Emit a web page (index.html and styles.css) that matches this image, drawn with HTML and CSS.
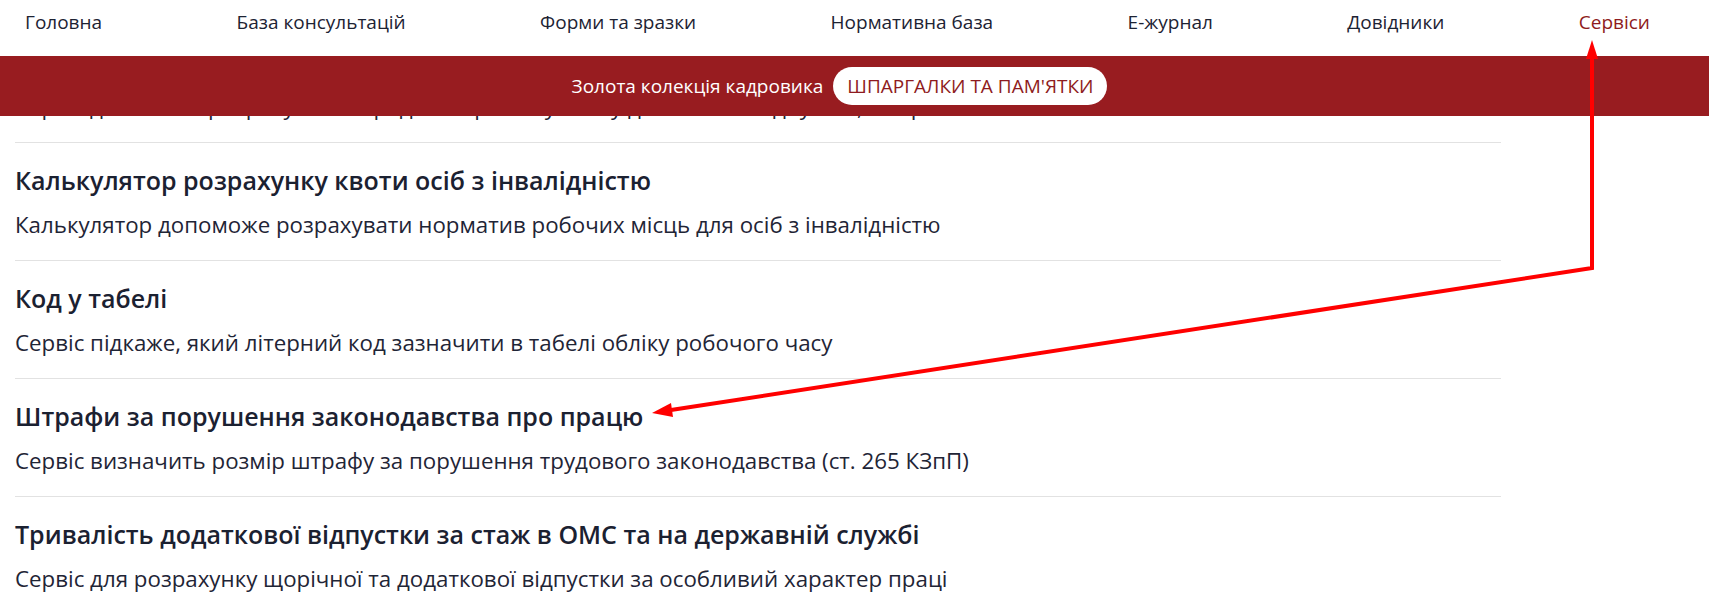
FILE: index.html
```html
<!DOCTYPE html>
<html lang="uk">
<head>
    <meta charset="UTF-8">
    <meta name="viewport" content="width=device-width, initial-scale=1.0">
    <title>Сервіси</title>
    <link rel="stylesheet" href="styles.css">
</head>
<body>
    <header class="top">
        <nav class="menu">
            <a href="#">Головна</a>
            <a href="#">База консультацій</a>
            <a href="#">Форми та зразки</a>
            <a href="#">Нормативна база</a>
            <a href="#">Е-журнал</a>
            <a href="#">Довідники</a>
            <a href="#" class="active">Сервіси</a>
        </nav>
        <div class="promo">
            <span>Золота колекція кадровика</span>
            <a href="#" class="pill">ШПАРГАЛКИ ТА ПАМ'ЯТКИ</a>
        </div>
    </header>

    <main class="viewport">
        <div class="services">
            <div class="service">
                <h3>Калькулятор середньої заробітної плати</h3>
                <p>Сервіс допоможе розрахувати середню заробітну плату для оплати відпусток, лікарняних та інших виплат</p>
            </div>
            <div class="service">
                <h3>Калькулятор розрахунку квоти осіб з інвалідністю</h3>
                <p>Калькулятор допоможе розрахувати норматив робочих місць для осіб з інвалідністю</p>
            </div>
            <div class="service">
                <h3>Код у табелі</h3>
                <p>Сервіс підкаже, який літерний код зазначити в табелі обліку робочого часу</p>
            </div>
            <div class="service">
                <h3>Штрафи за порушення законодавства про працю</h3>
                <p>Сервіс визначить розмір штрафу за порушення трудового законодавства (ст. 265 КЗпП)</p>
            </div>
            <div class="service">
                <h3>Тривалість додаткової відпустки за стаж в ОМС та на державній службі</h3>
                <p>Сервіс для розрахунку щорічної та додаткової відпустки за особливий характер праці</p>
            </div>
        </div>
    </main>

    <!-- annotation arrow drawn over the screenshot -->
    <svg class="annotation" width="1709" height="592" viewBox="0 0 1709 592">
        <polyline points="1592,56 1592,268 671,410" fill="none" stroke="#f00" stroke-width="4" stroke-linejoin="miter"/>
        <polygon points="1592,40 1598,59 1586,59" fill="#f00"/>
        <polygon points="652,413 673,417 671,403" fill="#f00"/>
    </svg>
</body>
</html>
```

FILE: styles.css
```css
body { margin: 0; font-family: "Open Sans", "Noto Sans", sans-serif; color: #1c2232; background: #fff; position: relative; overflow: hidden; }
a { text-decoration: none; color: inherit; }

.menu { display: flex; justify-content: space-between; height: 56px; box-sizing: border-box; padding: 7px 59px 0 25px; background: #fff; font-size: 19px; align-items: flex-start; }
.menu a { color: #1d2333; line-height: 30px; }
.menu a.active { color: #8e1b20; }

.promo { display: flex; justify-content: center; align-items: center; gap: 10px; height: 60px; padding-right: 30px; background: #981c20; color: #fff; font-size: 19px; }
.pill { background: #fff; color: #8e1b20; border-radius: 19px; padding: 6px 14px; line-height: 26px; }

/* list is scrolled: the top item is partly under the header */
.viewport { height: 476px; overflow: hidden; }
.services { width: 1486px; margin: -92px 0 0 15px; }
.service { border-top: 1px solid #e2e2e2; padding: 22px 0 20px; }
.service h3 { margin: 0 0 15px; font-size: 25px; font-weight: 600; line-height: 30px; color: #1b2131; }
.service p { margin: 0; font-size: 22.3px; line-height: 30px; color: #1f2536; }

.annotation { position: absolute; left: 0; top: 0; pointer-events: none; }
```
